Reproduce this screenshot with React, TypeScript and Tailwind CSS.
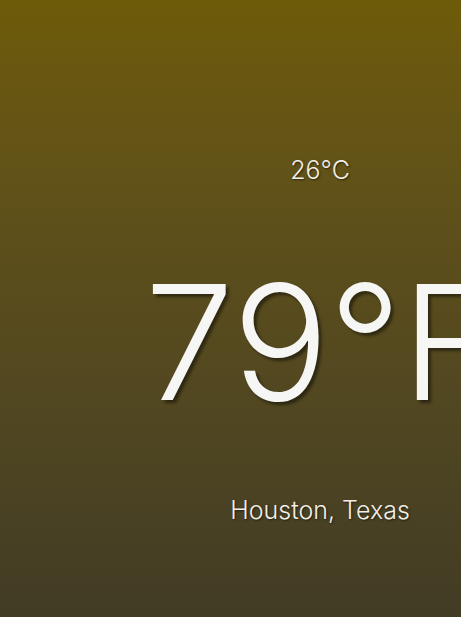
export default function App() {
  return (
    <div className="h-screen w-full overflow-hidden bg-gradient-to-b from-[#6e5b09] to-[#423c25]">
      <div
        className="flex w-[640px] flex-col items-center text-[#f2efe6]"
        style={{ fontFamily: "Inter, 'Helvetica Neue', sans-serif" }}
      >
        <p className="mt-[154px] text-[25px] font-light leading-[32px] [text-shadow:1px_1px_2px_rgba(0,0,0,0.55)]">
          26°C
        </p>
        <h1 className="mt-[56px] text-[160px] font-[260] leading-[200px] text-[#f6f6f4] [text-shadow:3px_3px_3px_rgba(0,0,0,0.45)]">
          79°F
        </h1>
        <p className="mt-[52px] text-[25px] font-light leading-[32px] [text-shadow:1px_1px_2px_rgba(0,0,0,0.55)]">
          Houston, Texas
        </p>
      </div>
    </div>
  );
}
